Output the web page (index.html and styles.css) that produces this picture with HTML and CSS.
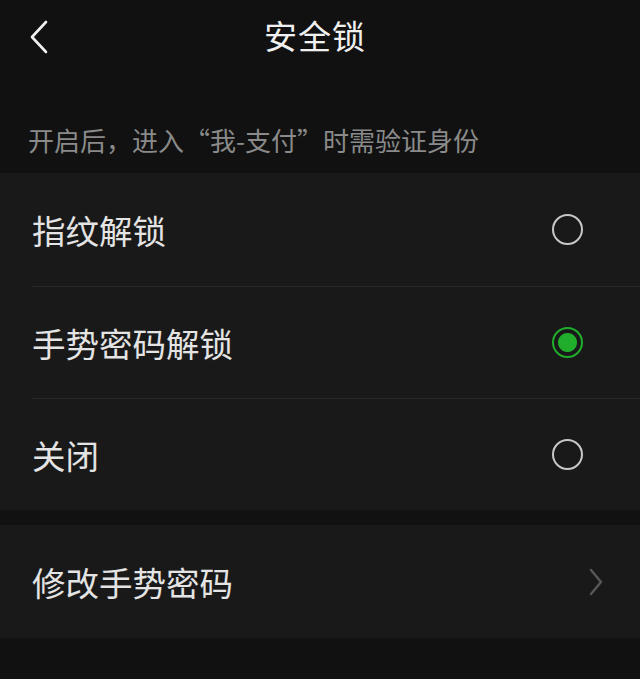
FILE: index.html
```html
<!DOCTYPE html>
<html lang="zh-CN">
<head>
    <meta charset="UTF-8">
    <meta name="viewport" content="width=device-width, initial-scale=1.0">
    <title>安全锁</title>
    <link rel="stylesheet" href="styles.css">
</head>
<body>
    <header class="topbar">
        <span class="back">
            <svg width="22" height="34" viewBox="0 0 22 34">
                <path d="M18 2 L4 17 L18 32" fill="none" stroke="#f0f0f0" stroke-width="2.6" stroke-linecap="round" stroke-linejoin="round"/>
            </svg>
        </span>
        <h1>安全锁</h1>
    </header>

    <p class="hint">开启后，进入“我-支付”时需验证身份</p>

    <section class="group">
        <div class="row first">
            <span class="label">指纹解锁</span>
            <span class="radio"></span>
        </div>
        <div class="row">
            <span class="label">手势密码解锁</span>
            <span class="radio checked"></span>
        </div>
        <div class="row">
            <span class="label">关闭</span>
            <span class="radio"></span>
        </div>
    </section>

    <section class="group">
        <div class="row first">
            <span class="label">修改手势密码</span>
            <svg class="arrow" width="16" height="28" viewBox="0 0 16 28">
                <path d="M3 2 L13 14 L3 26" fill="none" stroke="#585858" stroke-width="2.4" stroke-linecap="round" stroke-linejoin="round"/>
            </svg>
        </div>
    </section>
</body>
</html>
```

FILE: styles.css
```css
body {
    margin: 0;
    padding: 0;
    background-color: #111111;
    font-family: "Noto Sans CJK SC", "Noto Sans", sans-serif;
    color: #e6e6e6;
    width: 640px;
    height: 679px;
    overflow: hidden;
}

.topbar {
    height: 76px;
    position: relative;
    display: flex;
    align-items: center;
    justify-content: center;
}

.back {
    position: absolute;
    left: 28px;
    top: 20px;
    display: flex;
}

.topbar h1 {
    margin: 0 10px 6px 0;
    font-size: 33px;
    font-weight: normal;
    color: #f0f0f0;
    letter-spacing: 1px;
}

.hint {
    margin: 0;
    height: 97px;
    box-sizing: border-box;
    padding: 46px 0 0 28px;
    font-size: 26px;
    line-height: 36px;
    color: #8a8a8a;
}

.group {
    background-color: #191919;
    margin-bottom: 15px;
}

.row {
    height: 112px;
    display: flex;
    align-items: center;
    justify-content: space-between;
    padding: 0 57px 0 32px;
    position: relative;
}

.row.first {
    height: 113px;
}

.row + .row::before {
    content: '';
    position: absolute;
    top: 0;
    left: 32px;
    right: 0;
    height: 1px;
    background-color: #262626;
}

.label {
    font-size: 33.5px;
    color: #e4e4e4;
}

.radio {
    box-sizing: border-box;
    width: 31px;
    height: 31px;
    border: 2.5px solid #c8c8c8;
    border-radius: 50%;
}

.radio.checked {
    border: 2.7px solid #1fad2b;
    background: radial-gradient(circle, #1fad2b 0 9px, #191919 10px);
}

.arrow {
    margin-right: -21px;
}
```
